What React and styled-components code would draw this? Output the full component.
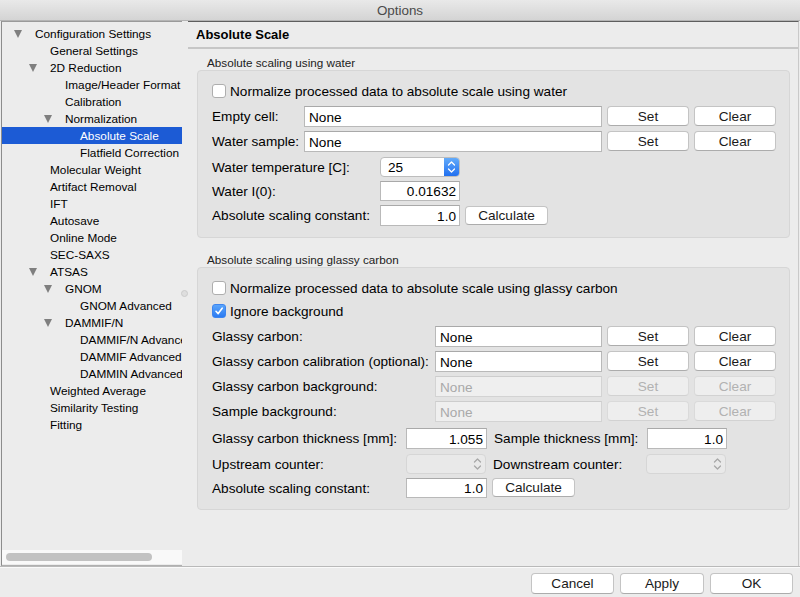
import React from 'react';
import styled, { createGlobalStyle } from 'styled-components';

const GlobalStyle = createGlobalStyle`
  html, body {
    margin: 0;
    padding: 0;
    background: #ececec;
    font-family: "Liberation Sans", Arial, sans-serif;
    color: #000;
  }
  * { box-sizing: border-box; }
`;

const Window = styled.div`
  width: 800px;
  height: 597px;
  display: flex;
  flex-direction: column;
  background: #ececec;
  overflow: hidden;
`;

const TitleBar = styled.div`
  height: 21px;
  flex: none;
  background: linear-gradient(#e9e9e9, #d4d4d4);
  border-bottom: 1px solid #b4b4b4;
  display: flex;
  align-items: center;
  justify-content: center;
  font-size: 13.4px;
  color: #4a4a4a;
`;

const Main = styled.div`
  height: 545px;
  flex: none;
  display: flex;
`;

const Sidebar = styled.div`
  width: 181px;
  flex: none;
  display: flex;
  flex-direction: column;
  border-left: 1px solid #8c8c8c;
  border-top: 1px solid #9a9a9a;
  border-bottom: 1px solid #b0b0b0;
  margin-left: 1px;
  background: #ececec;
`;

const TreeList = styled.div`
  flex: 1;
  padding-top: 3px;
  overflow: hidden;
`;

const TreeRow = styled.div`
  height: 17px;
  display: flex;
  align-items: center;
  position: relative;
  padding-left: ${p => 33 + p.level * 15}px;
  font-size: 11.8px;
  white-space: nowrap;
  overflow: hidden;
  background: ${p => (p.selected ? '#1c5bd5' : 'transparent')};
  color: ${p => (p.selected ? '#fff' : '#000')};
`;

const Arrow = styled.span`
  position: absolute;
  left: ${p => 12 + p.level * 15}px;
  top: 5px;
  width: 0;
  height: 0;
  border-left: 4.5px solid transparent;
  border-right: 4.5px solid transparent;
  border-top: 8px solid #7f7f7f;
`;

const HScroll = styled.div`
  height: 14px;
  flex: none;
  background: #f9f9f9;
  padding: 3px 30px 3px 4px;
  margin-bottom: 1px;
`;

const Thumb = styled.div`
  height: 8px;
  width: 146px;
  border-radius: 4px;
  background: #c2c2c2;
`;

const Splitter = styled.div`
  width: 6px;
  flex: none;
  position: relative;
`;

const Handle = styled.div`
  position: absolute;
  left: -1px;
  top: 269px;
  width: 7px;
  height: 7px;
  border-radius: 50%;
  background: #dedede;
  border: 1px solid #cbcbcb;
`;

const Content = styled.div`
  flex: 1;
  border-top: 1px solid #5e5e5e;
  border-right: 1px solid #c9c9c9;
  margin-right: 1px;
  display: flex;
  flex-direction: column;
`;

const Header = styled.div`
  height: 27px;
  flex: none;
  border-bottom: 2px solid #c6c6c6;
  padding-left: 8px;
  display: flex;
  align-items: center;
  font-size: 13px;
  font-weight: bold;
`;

const GroupTitle = styled.div`
  font-size: 11.7px;
  height: 14px;
  line-height: 14px;
  padding-left: 19px;
  margin-top: ${p => p.top}px;
  color: #222;
`;

const GroupBox = styled.div`
  margin: 0 8px 0 9px;
  background: #e3e3e3;
  border: 1px solid #d6d6d6;
  border-radius: 4px;
  padding: 10px 13px 11px 14px;
  display: flex;
  flex-direction: column;
`;

const Row = styled.div`
  display: flex;
  align-items: center;
  gap: ${p => p.gap ?? 5}px;
  height: ${p => p.h ?? 21}px;
  margin-top: ${p => p.mt ?? 0}px;
  font-size: 13.6px;
`;

const Label = styled.div`
  width: ${p => p.w}px;
  flex: none;
  white-space: nowrap;
  margin-left: ${p => p.ml ?? 0}px;
  color: #000;
`;

const CheckBox = styled.span`
  width: 14px;
  height: 14px;
  flex: none;
  border-radius: 3px;
  background: ${p => (p.checked ? 'linear-gradient(#5aa5fb, #2b7bf2)' : '#fff')};
  border: 1px solid ${p => (p.checked ? '#3d85ef' : '#aeaeae')};
  display: flex;
  align-items: center;
  justify-content: center;
  margin-right: 4px;
`;

const CheckRow = styled(Row)`
  gap: 0;
  height: 20px;
`;

const TextField = styled.div`
  height: ${p => p.h ?? 21}px;
  flex: ${p => (p.w ? 'none' : '1')};
  width: ${p => (p.w ? `${p.w}px` : 'auto')};
  background: ${p => (p.disabled ? '#efefef' : '#fff')};
  border: 1px solid ${p => (p.disabled ? '#d3d3d3' : '#b9b9b9')};
  border-top-color: ${p => (p.disabled ? '#cdcdcd' : '#a9a9a9')};
  color: ${p => (p.disabled ? '#a9a9a9' : '#000')};
  display: flex;
  align-items: center;
  justify-content: ${p => (p.right ? 'flex-end' : 'flex-start')};
  padding: 1px 3px 0 4px;
  font-size: 13.6px;
`;

const Button = styled.div`
  width: ${p => p.w ?? 82}px;
  height: ${p => p.h ?? 20}px;
  flex: none;
  align-self: flex-start;
  margin-top: ${p => p.mt ?? 0}px;
  background: ${p => (p.disabled ? '#eeeeee' : '#fff')};
  border: 1px solid ${p => (p.disabled ? '#dadada' : '#c4c4c4')};
  border-bottom-color: ${p => (p.disabled ? '#d2d2d2' : '#acacac')};
  border-radius: 4px;
  color: ${p => (p.disabled ? '#b2b2b2' : '#1a1a1a')};
  display: flex;
  align-items: center;
  justify-content: center;
  font-size: 13.6px;
`;

const Spin = styled.div`
  width: 80px;
  height: 20px;
  flex: none;
  border-radius: 4px;
  border: 1px solid ${p => (p.disabled ? '#d6d6d6' : '#bdbdbd')};
  background: ${p => (p.disabled ? '#e9e9e9' : '#fff')};
  display: flex;
  align-items: stretch;
  overflow: hidden;
  font-size: 13.6px;
`;

const SpinText = styled.div`
  flex: 1;
  display: flex;
  align-items: center;
  padding-left: 7px;
`;

const SpinArrows = styled.div`
  width: 15px;
  flex: none;
  display: flex;
  align-items: center;
  justify-content: center;
  background: ${p => (p.disabled ? 'transparent' : 'linear-gradient(#63abfa, #2170f0)')};
`;

const Footer = styled.div`
  flex: 1;
  border-top: 1px solid #b9b9b9;
  box-shadow: inset 0 1px 0 #fafafa;
  display: flex;
  justify-content: flex-end;
  align-items: flex-start;
  gap: 6px;
  padding: 6px 7px 0 0;
`;

const Chevrons = ({ color }) => (
  <svg width="9" height="14" viewBox="0 0 9 14">
    <path d="M1.5 5 L4.5 2 L7.5 5 M1.5 9 L4.5 12 L7.5 9" fill="none" stroke={color} strokeWidth="1.3" strokeLinecap="round" strokeLinejoin="round" />
  </svg>
);

const Check = () => (
  <svg width="10" height="10" viewBox="0 0 10 10">
    <path d="M2 5.3 L4.2 7.6 L8.2 2.2" fill="none" stroke="#fff" strokeWidth="1.6" strokeLinecap="round" strokeLinejoin="round" />
  </svg>
);

const tree = [
  { t: 'Configuration Settings', l: 0, open: true },
  { t: 'General Settings', l: 1 },
  { t: '2D Reduction', l: 1, open: true },
  { t: 'Image/Header Format', l: 2 },
  { t: 'Calibration', l: 2 },
  { t: 'Normalization', l: 2, open: true },
  { t: 'Absolute Scale', l: 3, sel: true },
  { t: 'Flatfield Correction', l: 3 },
  { t: 'Molecular Weight', l: 1 },
  { t: 'Artifact Removal', l: 1 },
  { t: 'IFT', l: 1 },
  { t: 'Autosave', l: 1 },
  { t: 'Online Mode', l: 1 },
  { t: 'SEC-SAXS', l: 1 },
  { t: 'ATSAS', l: 1, open: true },
  { t: 'GNOM', l: 2, open: true },
  { t: 'GNOM Advanced', l: 3 },
  { t: 'DAMMIF/N', l: 2, open: true },
  { t: 'DAMMIF/N Advanced', l: 3 },
  { t: 'DAMMIF Advanced', l: 3 },
  { t: 'DAMMIN Advanced', l: 3 },
  { t: 'Weighted Average', l: 1 },
  { t: 'Similarity Testing', l: 1 },
  { t: 'Fitting', l: 1 },
];

const FileRow = ({ label, w, mt, disabled }) => (
  <Row mt={mt}>
    <Label w={w}>{label}</Label>
    <TextField disabled={disabled}>None</TextField>
    <Button disabled={disabled}>Set</Button>
    <Button disabled={disabled}>Clear</Button>
  </Row>
);

const App = () => (
  <>
    <GlobalStyle />
    <Window>
      <TitleBar>Options</TitleBar>
      <Main>
        <Sidebar>
          <TreeList>
            {tree.map(item => (
              <TreeRow key={item.t} level={item.l} selected={item.sel}>
                {item.open && <Arrow level={item.l} />}
                {item.t}
              </TreeRow>
            ))}
          </TreeList>
          <HScroll>
            <Thumb />
          </HScroll>
        </Sidebar>
        <Splitter>
          <Handle />
        </Splitter>
        <Content>
          <Header>Absolute Scale</Header>
          <GroupTitle top={7}>Absolute scaling using water</GroupTitle>
          <GroupBox>
            <CheckRow>
              <CheckBox />
              Normalize processed data to absolute scale using water
            </CheckRow>
            <FileRow label="Empty cell:" w={87} mt={5} />
            <FileRow label="Water sample:" w={87} mt={4} />
            <Row mt={5} h={20}>
              <Label w={163}>Water temperature [C]:</Label>
              <Spin>
                <SpinText>25</SpinText>
                <SpinArrows>
                  <Chevrons color="#fff" />
                </SpinArrows>
              </Spin>
            </Row>
            <Row mt={4} h={20}>
              <Label w={163}>Water I(0):</Label>
              <TextField w={80} h={20} right>0.01632</TextField>
            </Row>
            <Row mt={4}>
              <Label w={163}>Absolute scaling constant:</Label>
              <TextField w={80} right>1.0</TextField>
              <Button w={83} h={19} mt={1}>Calculate</Button>
            </Row>
          </GroupBox>
          <GroupTitle top={15}>Absolute scaling using glassy carbon</GroupTitle>
          <GroupBox>
            <CheckRow>
              <CheckBox />
              Normalize processed data to absolute scale using glassy carbon
            </CheckRow>
            <CheckRow mt={3}>
              <CheckBox checked>
                <Check />
              </CheckBox>
              Ignore background
            </CheckRow>
            <FileRow label="Glassy carbon:" w={218} mt={5} />
            <FileRow label="Glassy carbon calibration (optional):" w={218} mt={4} />
            <FileRow label="Glassy carbon background:" w={218} mt={4} disabled />
            <FileRow label="Sample background:" w={218} mt={4} disabled />
            <Row mt={6}>
              <Label w={189}>Glassy carbon thickness [mm]:</Label>
              <TextField w={81} right>1.055</TextField>
              <Label w={148} ml={2}>Sample thickness [mm]:</Label>
              <TextField w={80} right>1.0</TextField>
            </Row>
            <Row mt={5} h={20}>
              <Label w={189}>Upstream counter:</Label>
              <Spin disabled>
                <SpinText />
                <SpinArrows disabled>
                  <Chevrons color="#a8a8a8" />
                </SpinArrows>
              </Spin>
              <Label w={148} ml={2}>Downstream counter:</Label>
              <Spin disabled>
                <SpinText />
                <SpinArrows disabled>
                  <Chevrons color="#a8a8a8" />
                </SpinArrows>
              </Spin>
            </Row>
            <Row mt={4} h={20}>
              <Label w={189}>Absolute scaling constant:</Label>
              <TextField w={81} h={20} right>1.0</TextField>
              <Button w={83} h={19}>Calculate</Button>
            </Row>
          </GroupBox>
        </Content>
      </Main>
      <Footer>
        <Button w={83} h={21}>Cancel</Button>
        <Button w={84} h={21}>Apply</Button>
        <Button w={83} h={21}>OK</Button>
      </Footer>
    </Window>
  </>
);

export default App;
